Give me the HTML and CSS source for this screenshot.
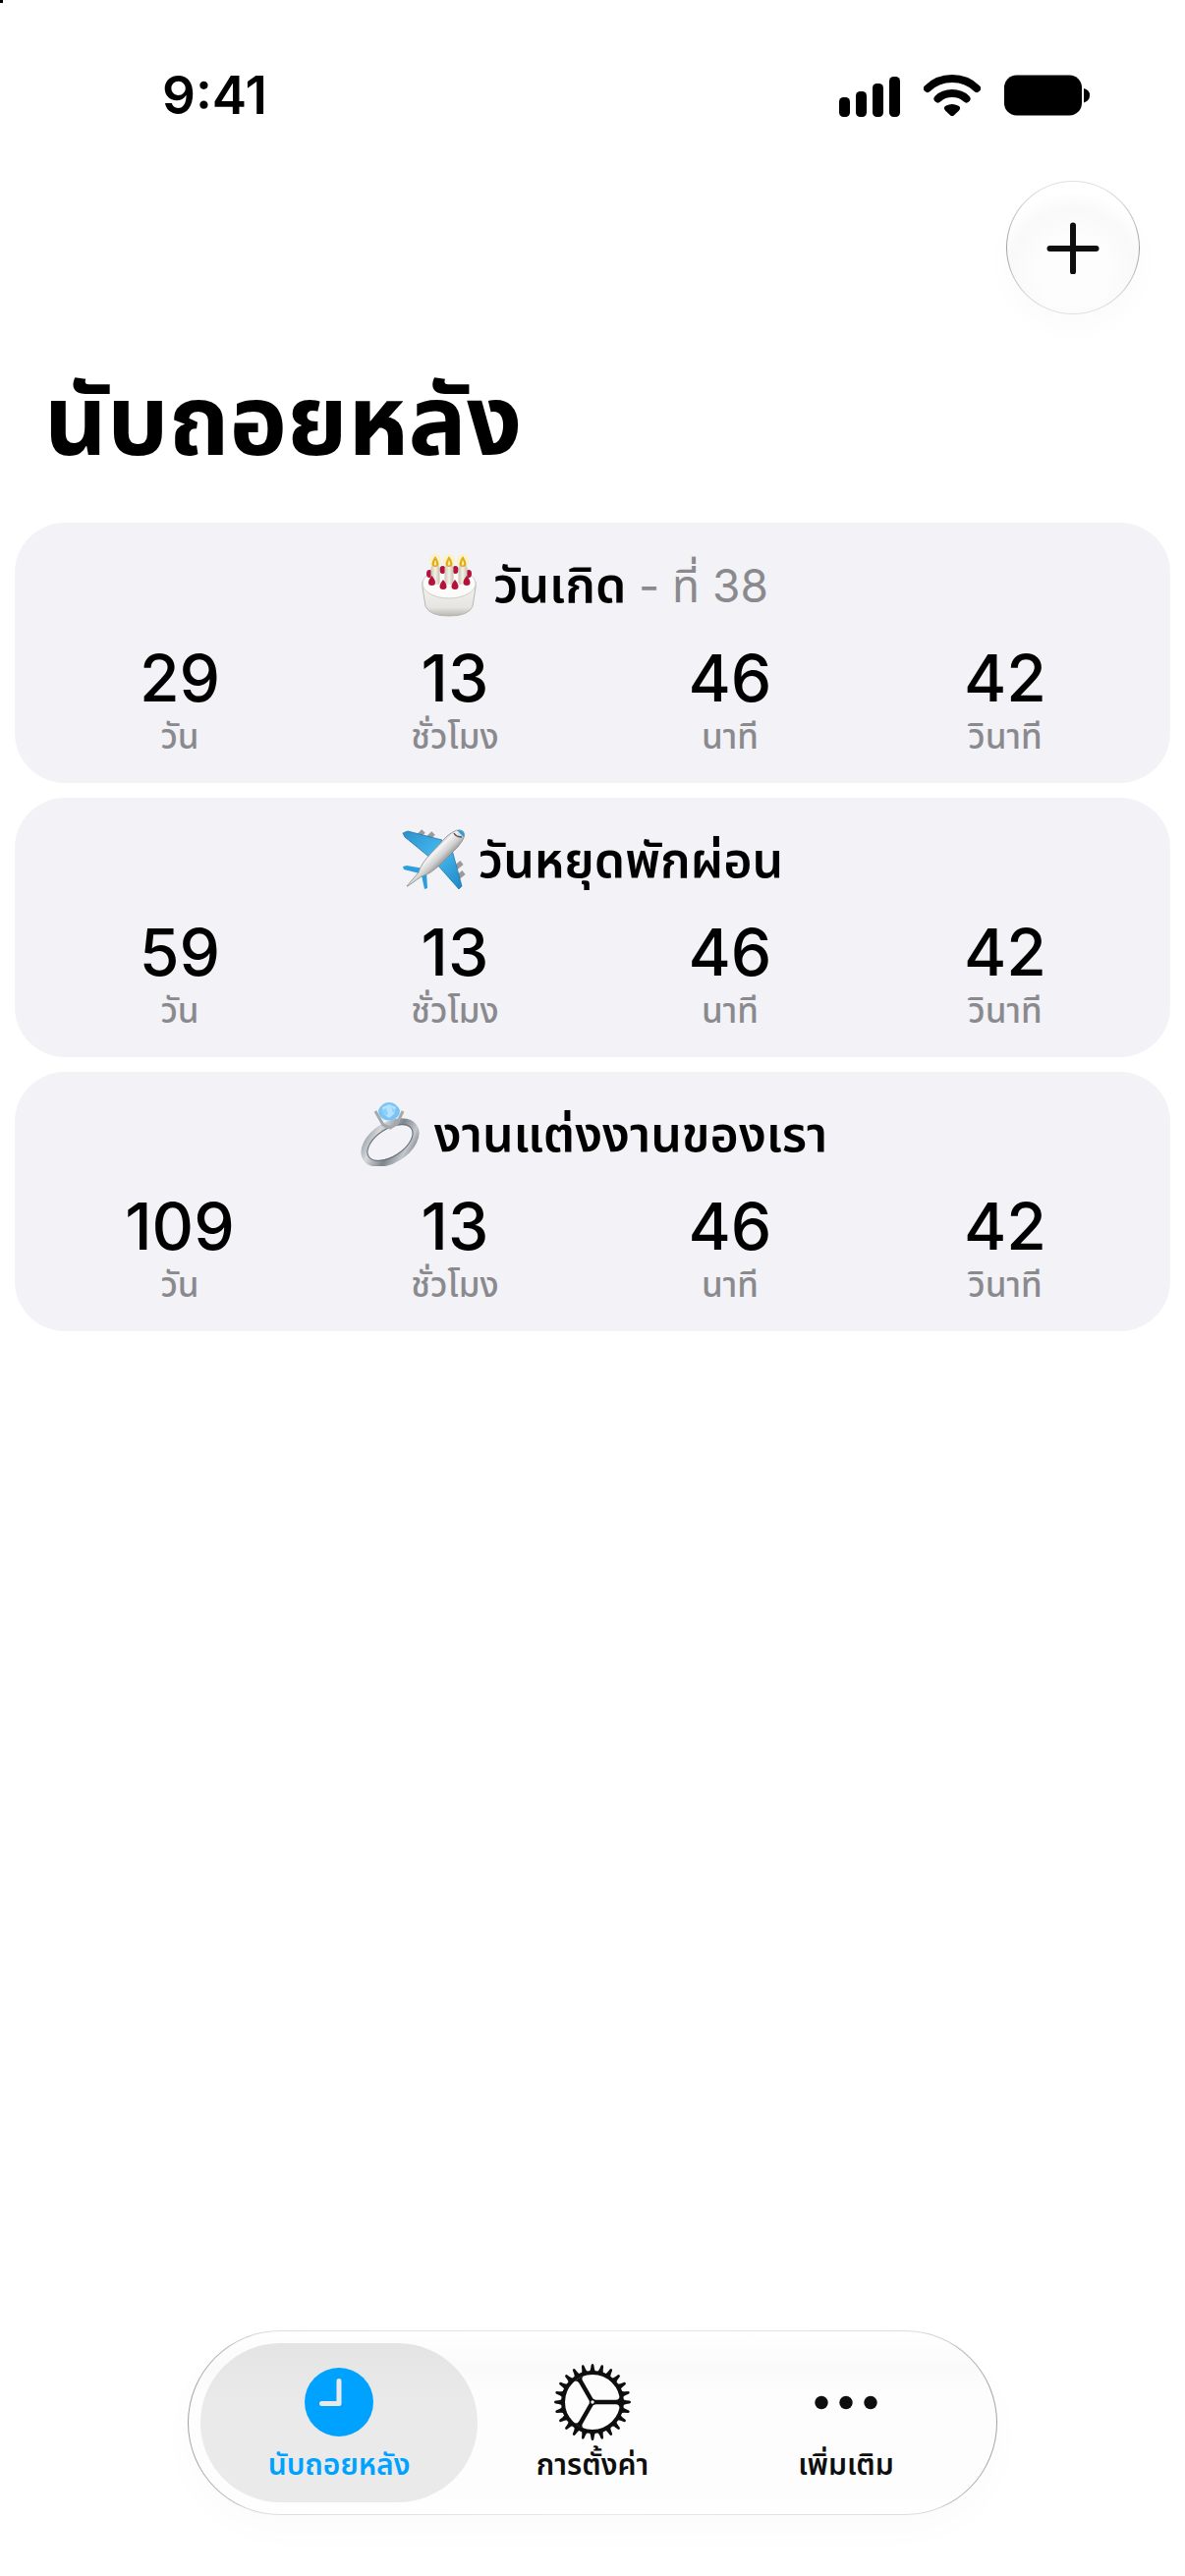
FILE: index.html
```html
<!DOCTYPE html>
<html lang="th">
<head>
<meta charset="utf-8">
<meta name="viewport" content="width=device-width, initial-scale=1">
<title>นับถอยหลัง</title>
<link rel="stylesheet" href="styles.css">
</head>
<body>
<div class="screen">
  <span class="corner-mark"></span>
  <header class="status">
    <time class="status-time">9:41</time>
    <div class="status-icons">
      <svg class="signal" viewBox="0 0 62 42" aria-hidden="true"><rect x="0" y="21" width="11" height="20" rx="4.5"/><rect x="17" y="15" width="11" height="26" rx="4.5"/><rect x="34" y="7" width="11" height="34" rx="4.5"/><rect x="51" y="0" width="11" height="41" rx="4.5"/></svg>
      <svg class="wifi" viewBox="0 0 58 42" aria-hidden="true"><g fill="none" stroke="#000" stroke-width="8" stroke-linecap="round"><path d="M4 14Q14 4 29 4T54 14"/><path d="M14.5 24.500Q20 19 29 19T43.500 24.500"/></g><path d="M22 36.500C20 34 21 32.500 23 31.500Q29 28.500 35 31.500C37 32.500 38 34 36 36.500L31 41.300Q29 43 27 41.300Z"/></svg>
      <svg class="battery" viewBox="0 0 87 41" aria-hidden="true"><rect width="79" height="41" rx="12.500"/><path d="M81 13.500Q87 15 87 20.500T81 28Z"/></svg>
    </div>
  </header>
  <div class="toolbar">
    <button class="add" type="button" aria-label="เพิ่ม"><svg viewBox="0 0 54 54" aria-hidden="true"><path d="M27 4.500V51.500M3.500 28H50.500"/></svg></button>
  </div>
  <main class="content">
    <h1 class="title">นับถอยหลัง</h1>
    <section class="card">
      <h2 class="card-title">
        <svg class="emoji" viewBox="0 0 66 66" role="img" aria-label="เค้กวันเกิด">
          <defs>
            <linearGradient id="cake" x2="0" y2="1"><stop offset="0" stop-color="#f4f3f1"/><stop offset=".75" stop-color="#e6e5e1"/><stop offset="1" stop-color="#b9b6af"/></linearGradient>
            <linearGradient id="wax"><stop stop-color="#c9c5b6"/><stop offset=".5" stop-color="#f4f1e6"/><stop offset="1" stop-color="#c6c2b2"/></linearGradient>
            <g id="candle"><ellipse cy="8" rx="6" ry="7" fill="#fff3a6" opacity=".6"/><rect x="-4.500" y="13" width="9" height="19" rx="2" fill="url(#wax)"/><path d="M0 3Q7 14 0 14T0 3Z" fill="#e4a91c"/><path d="M0 7Q2.500 12 0 12.500T0 7Z" fill="#fff2a0"/></g>
          </defs>
          <path d="M6 29V35L9 54Q13 64 33 64T57 54L60 35V29Z" fill="url(#cake)" stroke="#b9b7b1"/>
          <ellipse cx="33" cy="31" rx="27" ry="15" fill="#fbfbfa" stroke="#d0ceca"/>
          <g fill="#b3123b"><ellipse cx="13" cy="21" rx="3" ry="4"/><ellipse cx="26.500" cy="17" rx="3" ry="4"/><ellipse cx="39.500" cy="17" rx="3" ry="4"/><ellipse cx="53" cy="21" rx="3" ry="4"/></g>
          <use href="#candle" x="19"/><use href="#candle" x="33"/><use href="#candle" x="47"/>
          <g fill="#b3123b"><path d="M15.500 23Q19 27 19 30T15.500 33 12 30 15.500 23Z"/><path d="M27 27Q30.500 31 30.500 34T27 37 23.500 34 27 27Z"/><path d="M39 27Q42.500 31 42.500 34T39 37 35.500 34 39 27Z"/><path d="M51 23Q54.500 27 54.500 30T51 33 47.500 30 51 23Z"/></g>
        </svg>
        <span>วันเกิด <span class="ordinal">- ที่ 38</span></span>
      </h2>
      <dl class="counts">
        <div class="count"><dt>วัน</dt><dd>29</dd></div>
        <div class="count"><dt>ชั่วโมง</dt><dd>13</dd></div>
        <div class="count"><dt>นาที</dt><dd>46</dd></div>
        <div class="count"><dt>วินาที</dt><dd>42</dd></div>
      </dl>
    </section>
    <section class="card">
      <h2 class="card-title">
        <svg class="emoji" viewBox="0 0 66 66" role="img" aria-label="เครื่องบิน">
          <defs>
            <linearGradient id="hull" x1=".35" y1=".35" x2=".65" y2=".65"><stop stop-color="#a5a5a5"/><stop offset=".3" stop-color="#f4f4f4"/><stop offset=".6" stop-color="#cfcfcf"/><stop offset="1" stop-color="#777"/></linearGradient>
            <linearGradient id="wing" x2="1" y2="1"><stop stop-color="#2b8fc9"/><stop offset=".5" stop-color="#45b9f0"/><stop offset="1" stop-color="#1f86c4"/></linearGradient>
          </defs>
          <g stroke="#9a9a9a" stroke-width="5"><path d="M22 4L16 10M32 6L26 12M61 36L55 41M63 46L57 51"/></g>
          <path d="M1 6L6 4 41 13 30 32 3 10ZM36 38L51 23 61 60 58 63Z" fill="url(#wing)" stroke="#2277a8" stroke-width=".8"/>
          <path d="M1 40L5 39 22 42 18 47 2 43ZM20 49L25 45 26 62 23 63Z" fill="#2b9edb"/>
          <path d="M5 60L17 46Q19 38 30 26L46 9Q57 0 62 4T57 20L41 36Q29 48 20 50L6 60Z" fill="url(#hull)" stroke="#8b8b8b" stroke-width=".8"/>
          <path d="M56 3Q65 2 63 10Z" fill="#2b9edb"/><path d="M53 6Q55 10 61 10" fill="none" stroke="#555" stroke-width="1.500"/>
        </svg>
        <span>วันหยุดพักผ่อน</span>
      </h2>
      <dl class="counts">
        <div class="count"><dt>วัน</dt><dd>59</dd></div>
        <div class="count"><dt>ชั่วโมง</dt><dd>13</dd></div>
        <div class="count"><dt>นาที</dt><dd>46</dd></div>
        <div class="count"><dt>วินาที</dt><dd>42</dd></div>
      </dl>
    </section>
    <section class="card">
      <h2 class="card-title">
        <svg class="emoji" viewBox="0 0 66 66" role="img" aria-label="แหวน">
          <defs>
            <linearGradient id="band" x2="1" y2="1"><stop stop-color="#8f969d"/><stop offset=".25" stop-color="#d5d9dc"/><stop offset=".55" stop-color="#7d858d"/><stop offset=".8" stop-color="#c3c8cc"/><stop offset="1" stop-color="#6e7680"/></linearGradient>
          </defs>
          <ellipse cx="33" cy="42" rx="29" ry="17" transform="rotate(-33 33 42)" fill="none" stroke="url(#band)" stroke-width="7"/>
          <ellipse cx="33" cy="42" rx="26" ry="14" transform="rotate(-33 33 42)" fill="none" stroke="#69727b" stroke-width="1"/>
          <path d="M18 10L26 24 33 27 40 23 46 10" fill="none" stroke="#a4a9ad" stroke-width="3"/>
          <path d="M21 9Q25 1 32 1T43 9Q43 15 38 18 32 21 26 18 21 15 21 9Z" fill="#79c4f5"/>
          <path d="M25 6L32 3 39 6 37 13 32 17 26 13Z" fill="#b4e2fd"/><path d="M24 9L29 7 31 13 28 15ZM34 5L38 9 36 12Z" fill="#8fd0f8"/>
        </svg>
        <span>งานแต่งงานของเรา</span>
      </h2>
      <dl class="counts">
        <div class="count"><dt>วัน</dt><dd>109</dd></div>
        <div class="count"><dt>ชั่วโมง</dt><dd>13</dd></div>
        <div class="count"><dt>นาที</dt><dd>46</dd></div>
        <div class="count"><dt>วินาที</dt><dd>42</dd></div>
      </dl>
    </section>
  </main>
  <nav class="tabbar">
    <button class="tab tab-active" type="button" aria-current="page">
      <svg viewBox="0 0 80 80" aria-hidden="true"><circle cx="40" cy="40" r="35" fill="#00a2ff"/><path d="M40 18.500V41.500H22.500" fill="none" stroke="#e9e9e9" stroke-width="5" stroke-linecap="round" stroke-linejoin="round"/></svg>
      <span>นับถอยหลัง</span>
    </button>
    <button class="tab" type="button">
      <svg viewBox="0 0 80 80" aria-hidden="true">
        <defs>
          <path id="tooth" d="M35 10.500Q38 9.500 38.600 2.500Q38.800 1 40 1T41.400 2.500Q42 9.500 45 10.500Z"/>
          <g id="teeth"><use href="#tooth"/><use href="#tooth" transform="rotate(15 40 40)"/><use href="#tooth" transform="rotate(30 40 40)"/><use href="#tooth" transform="rotate(45 40 40)"/><use href="#tooth" transform="rotate(60 40 40)"/><use href="#tooth" transform="rotate(75 40 40)"/></g>
          <path id="spoke" d="M42 37.800H64Q67 37.800 68 34V46Q67 42.200 64 42.200H42Z"/>
        </defs>
        <g fill="#0e0e0e"><use href="#teeth"/><use href="#teeth" transform="rotate(90 40 40)"/><use href="#teeth" transform="rotate(180 40 40)"/><use href="#teeth" transform="rotate(270 40 40)"/><use href="#spoke"/><use href="#spoke" transform="rotate(120 40 40)"/><use href="#spoke" transform="rotate(240 40 40)"/></g>
        <circle cx="40" cy="40" r="30" fill="none" stroke="#0e0e0e" stroke-width="4"/>
        <circle cx="40" cy="40" r="2.500" fill="#fcfcfc" stroke="#0e0e0e" stroke-width="1.500"/>
      </svg>
      <span>การตั้งค่า</span>
    </button>
    <button class="tab" type="button">
      <svg viewBox="0 0 80 80" aria-hidden="true"><g fill="#0e0e0e"><circle cx="15" cy="40.500" r="6.700"/><circle cx="40" cy="40.500" r="6.700"/><circle cx="65" cy="40.500" r="6.700"/></g></svg>
      <span>เพิ่มเติม</span>
    </button>
  </nav>
</div>
</body>
</html>
```
FILE: styles.css
```css
* { box-sizing: border-box; }

body {
  margin: 0;
  background: #fff;
  color: #000;
  font-family: Inter, "Noto Sans Thai", "Noto Sans", sans-serif;
}

h1, h2, dl, dd { margin: 0; }

button {
  padding: 0;
  border: 0;
  background: none;
  color: inherit;
  font: inherit;
}

.screen {
  position: relative;
  display: flex;
  flex-direction: column;
  min-height: 100vh;
}

.corner-mark {
  position: absolute;
  top: 0;
  left: 0;
  width: 3px;
  height: 3px;
  background: #000;
}

.status {
  display: flex;
  justify-content: space-between;
  padding: 66px 97px 0 165px;
}

.status-time {
  font-size: 53px;
  font-weight: 600;
  line-height: 62px;
}

.status-icons {
  display: flex;
  gap: 24px;
  padding-top: 10px;
}

.status-icons svg { height: 42px; }
.signal { width: 62px; margin-top: 2px; }
.wifi { width: 58px; }
.battery { width: 87px; }

.toolbar {
  display: flex;
  justify-content: flex-end;
  padding: 56px 46px 0;
}

.add {
  display: grid;
  place-items: center;
  width: 136px;
  height: 136px;
  border: 1px solid transparent;
  border-radius: 50%;
  background:
    radial-gradient(circle at 50% 68%, #fdfdfd 30%, #f9f9f9 56%, #fff 72%) padding-box,
    linear-gradient(#e2e2e2, #a2a2a2 50%, #e2e2e2) border-box;
  box-shadow: 0 14px 30px rgba(0, 0, 0, 0.02);
}

.add svg {
  width: 54px;
  height: 54px;
  fill: none;
  stroke: #0e0e0e;
  stroke-width: 6;
  stroke-linecap: round;
}

.content {
  display: flex;
  flex-direction: column;
  gap: 15px;
  padding: 0 15px;
}

.title {
  padding: 25px 30px 8px;
  font-size: 99px;
  font-weight: 700;
  line-height: 164px;
}

.card {
  padding: 25px 28px;
  border-radius: 51px;
  background: #f2f2f7;
}

.card-title {
  display: flex;
  justify-content: center;
  align-items: center;
  gap: 12px;
  margin-bottom: 20px;
  font-size: 50px;
  font-weight: 600;
  line-height: 76px;
}

.emoji { width: 66px; height: 66px; }

.ordinal {
  color: #8a8a8e;
  font-size: 46px;
  font-weight: 400;
}

.counts {
  display: grid;
  grid-template-columns: repeat(4, 1fr);
}

.count {
  display: flex;
  flex-direction: column-reverse;
  align-items: center;
}

.count dd {
  font-size: 66px;
  font-weight: 500;
  line-height: 72px;
}

.count dt {
  color: #8a8a8e;
  font-size: 35px;
  font-weight: 500;
  line-height: 46px;
}

.tabbar {
  display: flex;
  align-self: center;
  margin-top: auto;
  margin-bottom: 62px;
  padding: 12px;
  border: 1px solid transparent;
  border-radius: 94px;
  background:
    linear-gradient(#fff, #fafafa 20%, #fdfdfd 34%, #fdfdfd 90%, #fff) padding-box,
    linear-gradient(90deg, #a2a2a2, #dedede 10%, #e8e8e8 50%, #dedede 90%, #a2a2a2) border-box;
  box-shadow: 0 14px 40px rgba(0, 0, 0, 0.02);
}

.tab {
  display: flex;
  flex-direction: column;
  align-items: center;
  width: 282px;
  height: 162px;
  padding-top: 20px;
  border-radius: 81px;
  color: #0e0e0e;
  font-size: 30px;
  font-weight: 600;
  line-height: 46px;
}

.tab + .tab { margin-left: -24px; }

.tab svg { width: 80px; height: 80px; }

.tab-active {
  background: linear-gradient(#e4e4e4, #eaeaea 40%);
  color: #00a2ff;
}
```
